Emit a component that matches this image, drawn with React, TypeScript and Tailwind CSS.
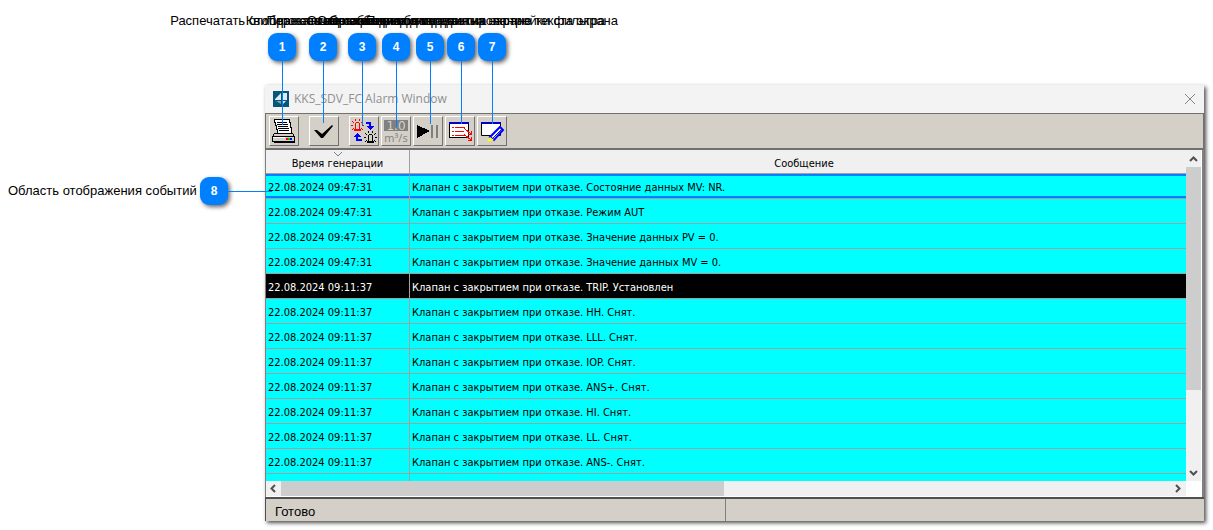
import React from "react";

type Callout = { n: number; text: string; badge: string; line: string };

const callouts: Callout[] = [
  { n: 1, text: "Распечатать отображаемые события", badge: "left-[282px]", line: "h-[64px]" },
  { n: 2, text: "Квитировать все события", badge: "left-[323px]", line: "h-[62px]" },
  { n: 3, text: "Переключение режима сигнала", badge: "left-[362px]", line: "h-[64px]" },
  { n: 4, text: "Отображение единиц данных", badge: "left-[396px]", line: "h-[66px]" },
  { n: 5, text: "Остановка обновления на экране", badge: "left-[430px]", line: "h-[63px]" },
  { n: 6, text: "Открытие диалогового окна настройки фильтра", badge: "left-[461px]", line: "h-[63px]" },
  { n: 7, text: "Переход к редактированию текста экрана", badge: "left-[492px]", line: "h-[63px]" },
];

const rows: [string, string][] = [
  ["22.08.2024 09:47:31", "Клапан с закрытием при отказе. Состояние данных MV: NR."],
  ["22.08.2024 09:47:31", "Клапан с закрытием при отказе. Режим AUT"],
  ["22.08.2024 09:47:31", "Клапан с закрытием при отказе. Значение данных PV = 0."],
  ["22.08.2024 09:47:31", "Клапан с закрытием при отказе. Значение данных MV = 0."],
  ["22.08.2024 09:11:37", "Клапан с закрытием при отказе. TRIP. Установлен"],
  ["22.08.2024 09:11:37", "Клапан с закрытием при отказе. HH. Снят."],
  ["22.08.2024 09:11:37", "Клапан с закрытием при отказе. LLL. Снят."],
  ["22.08.2024 09:11:37", "Клапан с закрытием при отказе. IOP. Снят."],
  ["22.08.2024 09:11:37", "Клапан с закрытием при отказе. ANS+. Снят."],
  ["22.08.2024 09:11:37", "Клапан с закрытием при отказе. HI. Снят."],
  ["22.08.2024 09:11:37", "Клапан с закрытием при отказе. LL. Снят."],
  ["22.08.2024 09:11:37", "Клапан с закрытием при отказе. ANS-. Снят."],
];

const badgeClass =
  "flex size-7 items-center justify-center rounded-[9px] bg-[#0080ff] text-[12px] font-bold text-white shadow-[2px_2px_4px_rgba(0,0,0,0.6)]";

function PrintIcon() {
  return (
    <svg width="26" height="26" viewBox="0 0 26 26" shapeRendering="crispEdges" aria-hidden="true">
      <path d="M3.5 1.5H18.5V4.5H19.5V9.5H20.5V15.5H6.5V11.5H5.5V7.5H4.5V4.5H3.5Z" fill="#fff" stroke="#000" />
      <path d="M6 4.5H16M6 6.5H17M7 8.5H17M7 10.5H18M8 12.5H18" stroke="#000" fill="none" />
      <path d="M3.5 15.5H21.5L23.5 18.5V23.5H1.5V18.5Z" fill="#d4d0c8" stroke="#000" />
      <path d="M2 18.5H23M3 24.5H24" stroke="#000" />
      <path d="M2 19.5H14" stroke="#fff" />
      <path d="M15 20.5H17" stroke="#f00" strokeWidth="2" />
      <path d="M17 20.5H19" stroke="#0c0" strokeWidth="2" />
      <path d="M19 20.5H21" stroke="#00f" strokeWidth="2" />
    </svg>
  );
}

function CheckIcon() {
  return (
    <svg width="26" height="26" viewBox="0 0 26 26" aria-hidden="true">
      <path d="M3 12H6L11 16L21 7L22 8L12 20H10Z" fill="#000" />
    </svg>
  );
}

function Lamp({ x, y, color }: { x: number; y: number; color: string }) {
  return (
    <g transform={`translate(${x} ${y})`} fill={color}>
      <path d="M5 3H8V4H5ZM4 4H5V10H4ZM8 4H9V10H8ZM3 10H10V12H3Z" />
      <path d="M4 0H5V2H4ZM8 0H9V2H8ZM0 6H2V7H0ZM11 6H13V7H11Z" />
      <path d="M1 2H2V3H1ZM2 3H3V4H2ZM11 2H12V3H11ZM10 3H11V4H10ZM1 10H2V11H1ZM2 9H3V10H2ZM11 10H12V11H11ZM10 9H11V10H10Z" />
    </g>
  );
}

function LampsIcon() {
  return (
    <svg width="26" height="26" viewBox="0 0 26 26" shapeRendering="crispEdges" aria-hidden="true">
      <Lamp x={0} y={1} color="#f00" />
      <Lamp x={13} y={13} color="#000" />
      <path d="M15 4H20V9H18V6H15ZM5 18H7V21H11V23H5Z" fill="#00f" />
      <path d="M15 8H23L19 12ZM2 19H10L6 15Z" fill="#00f" />
    </svg>
  );
}

function UnitsIcon() {
  return (
    <svg width="26" height="26" viewBox="0 0 26 26" aria-hidden="true">
      <path d="M1 2H25V13H1Z" fill="#808080" />
      <text x="13" y="12" textAnchor="middle" fontSize="12" fontFamily="DejaVu Sans, sans-serif" fill="#d4d0c8">1.0</text>
      <text x="13" y="24" textAnchor="middle" fontSize="11" fontFamily="Open Sans, sans-serif" fill="#808080">m³/s</text>
    </svg>
  );
}

function PlayPauseIcon() {
  return (
    <svg width="26" height="26" viewBox="0 0 26 26" shapeRendering="crispEdges" aria-hidden="true">
      <path d="M2 7L15 13L2 20Z" fill="#000" />
      <path d="M16 7H18V20H16ZM21 7H23V20H21Z" fill="#808080" />
    </svg>
  );
}

function ListIcon() {
  return (
    <svg width="26" height="26" viewBox="0 0 26 26" shapeRendering="crispEdges" aria-hidden="true">
      <path d="M2.5 4.5H21.5V19.5H2.5Z" fill="#fff" stroke="#000" />
      <path d="M2 5H22" stroke="#00c" strokeWidth="2" />
      <path d="M5 9.5H7M8 9.5H18M5 13.5H7M8 13.5H17M5 17.5H7M8 17.5H18" stroke="#f00" fill="none" />
      <path d="M17.5 10.5L24.5 16.5M17.5 16.5L24.5 22.5M24.5 13V16.5H21M24.5 19V22.5H21" stroke="#f00" fill="none" />
    </svg>
  );
}

function EditIcon() {
  return (
    <svg width="26" height="26" viewBox="0 0 26 26" aria-hidden="true">
      <path d="M2.5 5.5H21.5V17.5H2.5Z" fill="#fff" stroke="#000" />
      <path d="M2 5H22" stroke="#00c" strokeWidth="2" />
      <path d="M21 9L24 12L15 22L11 19Z" fill="#fff" stroke="#00f" strokeWidth="2" />
      <path d="M23 11L13 21" stroke="#00f" />
      <path d="M11 19L15 22L8 24Z" fill="#ff0" />
    </svg>
  );
}

const tools = [
  { label: "Печать", icon: <PrintIcon />, gap: "" },
  { label: "Квитировать", icon: <CheckIcon />, gap: "ml-[10px]" },
  { label: "Переключить", icon: <LampsIcon />, gap: "ml-[10px]" },
  { label: "Единицы", icon: <UnitsIcon />, gap: "ml-[2px]" },
  { label: "Пауза", icon: <PlayPauseIcon />, gap: "ml-[2px]" },
  { label: "Список", icon: <ListIcon />, gap: "ml-[2px]" },
  { label: "Фильтр", icon: <EditIcon />, gap: "ml-[2px]" },
];

function Chevron({ turn }: { turn: string }) {
  return (
    <svg className={turn} width="9" height="9" viewBox="0 0 9 9" aria-hidden="true">
      <path d="M1 6L4.5 2.5L8 6" fill="none" stroke="#505050" strokeWidth="2" />
    </svg>
  );
}

function AlarmWindow() {
  return (
    <section className="flex flex-col bg-[#f3f3f3] shadow-[2px_2px_4px_rgba(0,0,0,0.7)]">
      <header className="flex h-7 items-center pl-2 pr-2 text-[12px] text-[#909090]">
        <svg width="16" height="16" viewBox="0 0 16 16" aria-hidden="true">
          <path d="M0 0H16V16H0Z" fill="#075577" />
          <path d="M2 8L8 2V9H2ZM9 2H14V9H9ZM9 10H13L9 14Z" fill="#dcecf2" />
          <path d="M3 10H8V13Z" fill="#7aa7bb" />
        </svg>
        <h1 className="ml-[5px] font-['Open_Sans',sans-serif]">KKS_SDV_FC Alarm Window</h1>
        <button aria-label="Закрыть" className="ml-auto">
          <svg width="12" height="12" viewBox="0 0 12 12" aria-hidden="true">
            <path d="M1 1L11 11M11 1L1 11" stroke="#858585" />
          </svg>
        </button>
      </header>
      <div className="flex h-[37px] items-center border-b-2 border-l border-r border-t border-[#707070] bg-[#d4d0c8] pl-[3px]">
        {tools.map((t) => (
          <button
            key={t.label}
            aria-label={t.label}
            className={`flex h-[30px] w-[30px] items-center justify-center border border-b-[#707070] border-l-white border-r-[#707070] border-t-white ${t.gap}`}
          >
            {t.icon}
          </button>
        ))}
      </div>
      <div className="flex border-l border-r-2 border-[#808080] bg-white pr-px">
        <div className="h-[331px] min-w-0 flex-1 overflow-hidden bg-[#00ffff]">
          <table className="w-full table-fixed border-separate border-spacing-0 font-['DejaVu_Sans_Condensed','DejaVu_Sans',sans-serif] text-[11px]">
            <colgroup>
              <col className="w-[144px]" />
              <col />
            </colgroup>
            <thead>
              <tr className="h-6 bg-[#f0f0f0]">
                <th className="relative border-b border-r border-[#a0a0a0] p-0 pt-1.5 font-normal">
                  Время генерации
                  <svg className="absolute left-[68px] top-[2px]" width="8" height="5" viewBox="0 0 8 5" aria-hidden="true">
                    <path d="M0 0L4 4L8 0" fill="none" stroke="#808080" />
                  </svg>
                </th>
                <th className="border-b border-[#a0a0a0] pb-0 pl-3 pr-0 pt-1.5 font-normal">Сообщение</th>
              </tr>
            </thead>
            <tbody>
              {rows.map(([time, message], i) => {
                const color = i === 4 ? "bg-black text-white" : "bg-[#00ffff] text-black";
                const edge = i === 0 ? "border-t-2 border-t-[#0080ff] pt-[2px] shadow-[inset_0_-2px_0_#0080ff]" : "pt-1";
                return (
                  <tr key={i} className={`h-[25px] ${color}`}>
                    <td className={`whitespace-nowrap border-b border-r border-[#a0a0a0] pb-0 pl-[2px] pr-0 ${edge}`}>{time}</td>
                    <td className={`whitespace-nowrap border-b border-[#a0a0a0] pb-0 pl-[2px] pr-0 ${edge}`}>{message}</td>
                  </tr>
                );
              })}
              <tr className="h-[25px]">
                <td className="border-r border-[#a0a0a0]" />
                <td />
              </tr>
            </tbody>
          </table>
        </div>
        <div className="flex w-[15px] flex-col items-center bg-[#f0f0f0]">
          <div className="flex h-[17px] items-center pt-[2px]"><Chevron turn="" /></div>
          <div className="h-[223px] w-full bg-[#cdcdcd]" />
          <div className="mt-auto flex h-[18px] items-center"><Chevron turn="rotate-180" /></div>
        </div>
      </div>
      <div className="flex border-l border-r-2 border-[#808080] bg-white pb-px pr-4">
        <div className="flex h-[15px] flex-1 items-center bg-[#f0f0f0]">
          <div className="flex w-[15px] justify-center"><Chevron turn="-rotate-90" /></div>
          <div className="h-full w-[48.2%] bg-[#cdcdcd]" />
          <div className="ml-auto flex w-[18px] justify-center"><Chevron turn="rotate-90" /></div>
        </div>
      </div>
      <footer className="flex h-6 border-l border-t-2 border-[#505050] bg-[#d4d0c8] text-[13px]">
        <div className="flex w-[49%] items-center border-r border-[#808080] pl-[9px] pt-[3px]">Готово</div>
      </footer>
    </section>
  );
}

export default function App() {
  return (
    <main className="relative bg-white pb-2 pl-[265px] pr-[9px] pt-[85px] font-['Liberation_Sans',Arial,sans-serif] text-black">
      <AlarmWindow />
      {callouts.map((c) => (
        <div key={c.n} className={`absolute top-3 flex w-0 flex-col items-center ${c.badge}`}>
          <span className="whitespace-nowrap text-[13px] leading-[18px]">{c.text}</span>
          <span className={`mt-[3px] shrink-0 ${badgeClass}`}>{c.n}</span>
          <span className={`w-px shrink-0 bg-[#0080ff] ${c.line}`} />
        </div>
      ))}
      <div className="absolute left-2 top-[177px] flex items-center">
        <span className="w-[192px] whitespace-nowrap text-[13px]">Область отображения событий</span>
        <span className={badgeClass}>8</span>
        <span className="h-px w-[44px] bg-[#0080ff]" />
      </div>
    </main>
  );
}
